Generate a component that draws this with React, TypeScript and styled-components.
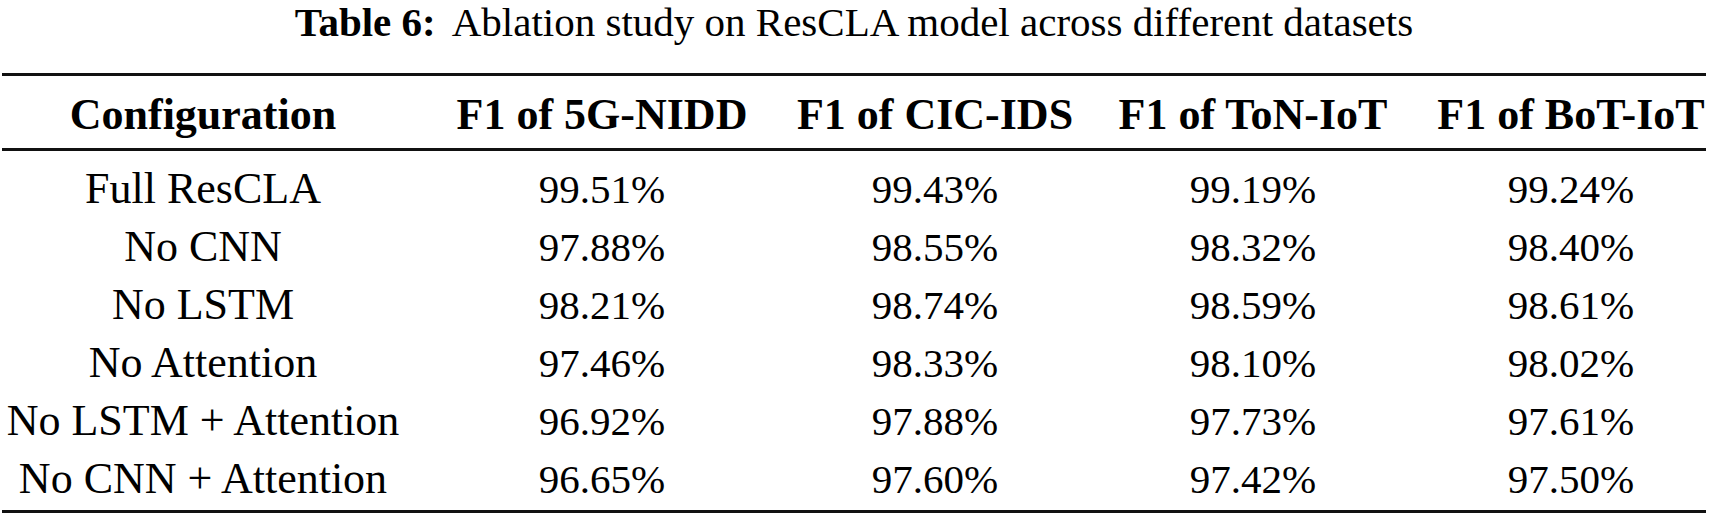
import React from "react";
import styled, { createGlobalStyle } from "styled-components";

const serifStack = `"Liberation Serif", Tinos, "DejaVu Serif", serif`;

const GlobalStyle = createGlobalStyle`
  html, body {
    margin: 0;
    padding: 0;
    background: #ffffff;
  }
  body {
    font-family: ${serifStack};
    color: #000000;
  }
`;

interface Row {
  config: string;
  values: string[];
}

const headers = [
  "Configuration",
  "F1 of 5G-NIDD",
  "F1 of CIC-IDS",
  "F1 of ToN-IoT",
  "F1 of BoT-IoT",
];

const rows: Row[] = [
  { config: "Full ResCLA", values: ["99.51%", "99.43%", "99.19%", "99.24%"] },
  { config: "No CNN", values: ["97.88%", "98.55%", "98.32%", "98.40%"] },
  { config: "No LSTM", values: ["98.21%", "98.74%", "98.59%", "98.61%"] },
  { config: "No Attention", values: ["97.46%", "98.33%", "98.10%", "98.02%"] },
  { config: "No LSTM + Attention", values: ["96.92%", "97.88%", "97.73%", "97.61%"] },
  { config: "No CNN + Attention", values: ["96.65%", "97.60%", "97.42%", "97.50%"] },
];

export default function App() {
  return (
    <>
      <GlobalStyle />
      <Page>
        <Caption>
          <CaptionLabel>Table 6:</CaptionLabel>
          <span>Ablation study on ResCLA model across different datasets</span>
        </Caption>
        <Table>
          <HeaderRow>
            {headers.map((h) => (
              <HeaderCell key={h}>{h}</HeaderCell>
            ))}
          </HeaderRow>
          <Body>
            {rows.map((row) => (
              <DataRow key={row.config}>
                <Cell $label>{row.config}</Cell>
                {row.values.map((v, i) => (
                  <Cell key={i}>{v}</Cell>
                ))}
              </DataRow>
            ))}
          </Body>
        </Table>
      </Page>
    </>
  );
}

const Page = styled.div`
  width: 1709px;
  height: 515px;
  box-sizing: border-box;
  padding: 0 3px 0 2px;
  overflow: hidden;
  font-family: ${serifStack};
`;

const Caption = styled.div`
  display: flex;
  justify-content: center;
  gap: 16px;
  font-size: 41px;
  line-height: 44px;
  white-space: nowrap;
`;

const CaptionLabel = styled.span`
  font-weight: 700;
`;

const Table = styled.div`
  margin-top: 29px;
  border-top: 3px solid #111;
  border-bottom: 3px solid #111;
`;

const gridColumns = "402px 396px 270px 366px 270px";

const HeaderRow = styled.div`
  display: grid;
  grid-template-columns: ${gridColumns};
  padding: 10px 0 4px;
  border-bottom: 3px solid #111;
`;

const HeaderCell = styled.div`
  display: flex;
  justify-content: center;
  font-size: 44px;
  line-height: 58px;
  font-weight: 700;
  white-space: nowrap;
`;

const Body = styled.div`
  padding: 9px 0 2px;
`;

const DataRow = styled.div`
  display: grid;
  grid-template-columns: ${gridColumns};
  align-items: baseline;
  height: 58px;
`;

const Cell = styled.div<{ $label?: boolean }>`
  display: flex;
  justify-content: center;
  font-size: ${(p) => (p.$label ? "44px" : "41px")};
  line-height: 58px;
  white-space: nowrap;
`;
